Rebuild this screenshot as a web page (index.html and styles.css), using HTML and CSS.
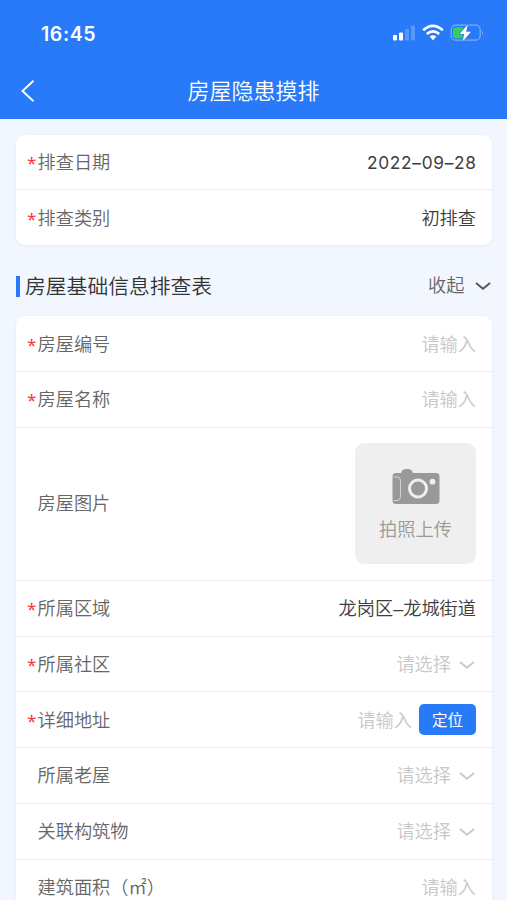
FILE: index.html
```html
<!DOCTYPE html>
<html lang="zh-CN">
<head>
<meta charset="utf-8">
<title>房屋隐患摸排</title>
<link rel="stylesheet" href="styles.css">
</head>
<body>
<header class="header">
  <div class="status">
    <span class="time">16:45</span>
    <svg class="status-icons" width="92" height="20" viewBox="0 0 92 20">
      <g fill="#fff">
        <rect x="1" y="12" width="4" height="5.5" rx="1"/>
        <rect x="7" y="9.5" width="4" height="8" rx="1"/>
        <rect x="13" y="6" width="4" height="11.5" rx="1" opacity=".22"/>
        <rect x="19" y="2.5" width="4" height="15" rx="1" opacity=".22"/>
      </g>
      <g fill="none" stroke="#fff" stroke-width="2.7">
        <path d="M31.2 7.2Q41 -1.4 50.8 7.2"/>
        <path d="M34.8 11Q41 5.6 47.2 11"/>
      </g>
      <path d="M37.7 13.6Q41 11 44.3 13.6L41 17.2Z" fill="#fff"/>
      <rect x="59.2" y="2.2" width="29" height="15" rx="4.5" fill="none" stroke="#fff" stroke-opacity=".4" stroke-width="1.2"/>
      <path d="M90 7.5Q92 9.7 90 12Z" fill="#fff" opacity=".45"/>
      <path d="M63.5 4.2H71V15.2H63.5Q61 15.2 61 12.7V6.7Q61 4.2 63.5 4.2Z" fill="#34cf5c"/>
      <path d="M75.8 1.5L67.5 11H72.2L70.7 18.5L79 8.7H74.2Z" fill="#fff" stroke="#287af8" stroke-width="1.5" paint-order="stroke" stroke-linejoin="round"/>
    </svg>
  </div>
  <div class="nav">
    <svg class="back" width="16" height="24" viewBox="0 0 16 24"><path d="M13.5 1.8L2.5 12L13.5 22.2" fill="none" stroke="#fff" stroke-width="1.9"/></svg>
    <h1>房屋隐患摸排</h1>
  </div>
</header>
<main>
  <section class="card">
    <div class="row"><span class="label required">排查日期</span><span class="value date">2022–09–28</span></div>
    <div class="row"><span class="label required">排查类别</span><span class="value">初排查</span></div>
  </section>
  <div class="section-head">
    <h2>房屋基础信息排查表</h2>
    <span class="toggle">收起<svg class="chevron" width="18" height="10" viewBox="0 0 18 10"><path d="M2 2L9 7.7L16 2"/></svg></span>
  </div>
  <section class="card">
    <div class="row"><span class="label required">房屋编号</span><span class="hint">请输入</span></div>
    <div class="row"><span class="label required">房屋名称</span><span class="hint">请输入</span></div>
    <div class="row photo-row"><span class="label">房屋图片</span>
      <div class="upload">
        <svg width="48" height="37" viewBox="0 0 48 37">
          <path d="M4 5H9Q10 1 14 1H16Q20 1 21 5H44Q47.5 5 47.5 8.500V32.500Q47.500 36 44 36H4Q.5 36 .5 32.500V8.500Q.5 5 4 5Z" fill="#999"/>
          <path d="M1.500 9H5Q8.500 9 8.500 12.500V28.500Q8.500 32.500 5 32.500H1.500" fill="none" stroke="#d2d2d2"/>
          <circle cx="26" cy="20.500" r="8.500" fill="none" stroke="#efefef" stroke-width="3"/>
          <circle cx="40.500" cy="13.700" r="2.900" fill="#efefef"/>
        </svg>
        <span>拍照上传</span>
      </div>
    </div>
    <div class="row"><span class="label required">所属区域</span><span class="value">龙岗区–龙城街道</span></div>
    <div class="row"><span class="label required">所属社区</span><span class="hint">请选择<svg class="chevron" width="18" height="10" viewBox="0 0 18 10"><path d="M2 2L9 7.7L16 2"/></svg></span></div>
    <div class="row"><span class="label required">详细地址</span><span class="hint">请输入<button class="locate">定位</button></span></div>
    <div class="row"><span class="label">所属老屋</span><span class="hint">请选择<svg class="chevron" width="18" height="10" viewBox="0 0 18 10"><path d="M2 2L9 7.7L16 2"/></svg></span></div>
    <div class="row"><span class="label">关联构筑物</span><span class="hint">请选择<svg class="chevron" width="18" height="10" viewBox="0 0 18 10"><path d="M2 2L9 7.7L16 2"/></svg></span></div>
    <div class="row"><span class="label">建筑面积（㎡）</span><span class="hint">请输入</span></div>
  </section>
</main>
</body>
</html>
```
FILE: styles.css
```css
* { box-sizing: border-box; }
html, body { height: 900px; overflow: hidden; }
body {
  margin: 0;
  background: #f2f7ff;
  color: #444;
  font: 350 18.2px/26px "Liberation Sans", "Noto Sans CJK SC", sans-serif;
}
.header { height: 119px; background: #287af8; color: #fff; }
.status {
  height: 64px;
  padding: 3px 23px 0 41px;
  display: flex;
  align-items: center;
  justify-content: space-between;
}
.time { font: 600 19.5px/24px Inter, sans-serif; letter-spacing: .6px; }
.status-icons { margin-top: -1px; }
.nav {
  height: 55px;
  padding: 0 20px;
  display: grid;
  grid-template-columns: 16px 1fr 16px;
  align-items: center;
}
.back { margin-top: -1px; }
h1 { margin: 0; font-size: 22px; line-height: 32px; font-weight: 350; text-align: center; }
main { padding: 15.500px 15.500px 0 16px; }
.card { background: #fff; border-radius: 9px; box-shadow: 0 1px 4px rgba(40, 90, 160, .07); }
.row {
  height: 55.750px;
  padding: 2px 15.500px 0 11px;
  display: flex;
  align-items: center;
  justify-content: space-between;
  border-bottom: 1px solid #eee;
}
.row:last-child { height: 55px; border-bottom: 0; }
.label { color: #666; padding-left: 10.500px; display: flex; }
.required { padding-left: 0; }
.required::before { content: "*"; width: 10.500px; color: #f5363c; font: 17px/25px "Noto Sans", sans-serif; height: 26px; }
.value { color: #3d3d3d; }
.date { font: 400 17.3px/26px Inter, sans-serif; letter-spacing: .7px; margin-right: -.7px; }
.hint { color: #c8c8c8; display: flex; align-items: center; }
.chevron { margin-left: 7px; fill: none; stroke: currentColor; stroke-width: 1.900; }
.section-head {
  height: 71px;
  padding-top: 11px;
  display: flex;
  align-items: center;
  justify-content: space-between;
}
h2 {
  margin: 0;
  padding-left: 5px;
  border-left: 4px solid #287af8;
  font-size: 20.800px;
  line-height: 21px;
  font-weight: 350;
  color: #333;
}
.toggle { display: flex; align-items: center; color: #666; }
.toggle .chevron { margin-left: 9px; color: #555; }
.photo-row { height: 153px; padding-top: 0; }
.photo-row .label { padding-top: 1px; }
.upload {
  width: 121px;
  height: 121px;
  padding-top: 25px;
  border-radius: 9px;
  background: #efefef;
  color: #999;
  display: flex;
  flex-direction: column;
  align-items: center;
  gap: 12px;
}
.locate {
  width: 57px;
  height: 31px;
  margin: -3px 0 0 7px;
  padding: 0;
  border: 0;
  border-radius: 5px;
  background: #287af8;
  color: #fff;
  font: 400 15.500px/29px "Noto Sans CJK SC", sans-serif;
}
```
